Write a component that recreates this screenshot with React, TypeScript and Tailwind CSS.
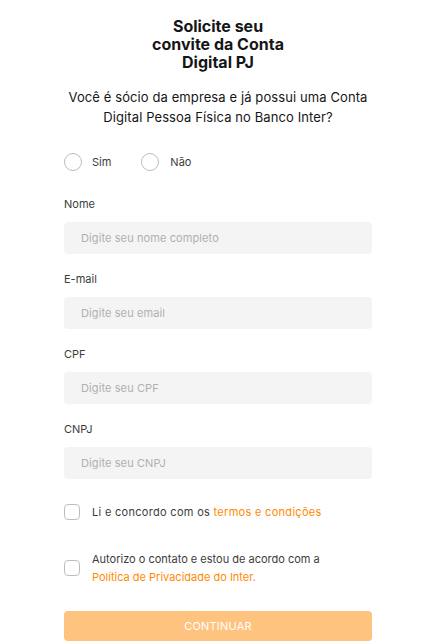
import React from "react";

const Field = ({ label, placeholder }: { label: string; placeholder: string }) => (
  <div className="flex flex-col">
    <label className="text-[11px] leading-[16px] text-[#3c3c3c]">{label}</label>
    <div className="mt-[10px] h-[32px] rounded-[4px] bg-[#f4f4f4] flex items-center pl-[17px] text-[11px] tracking-[0.1px] text-[#b0b0b0]">
      {placeholder}
    </div>
  </div>
);

export default function App() {
  return (
    <div className="min-h-[644px] bg-white" style={{ fontFamily: "Inter, 'Noto Sans', sans-serif" }}>
      <div className="ml-[64px] w-[308px] flex flex-col pt-[17px]">
        <h1 className="mx-auto w-[150px] text-center text-[16px] leading-[18px] font-bold text-[#161616]">
          Solicite seu convite da Conta Digital PJ
        </h1>
        <p className="mt-[16px] text-center text-[13px] leading-[20px] tracking-[0.1px] text-[#161616]">
          Você é sócio da empresa e já possui uma Conta Digital Pessoa Física no Banco Inter?
        </p>
        <div className="mt-[26px] flex items-center h-[18px]">
          <div className="flex items-center">
            <span className="w-[18px] h-[18px] rounded-full border border-[#bdbdbd]" />
            <span className="ml-[10px] text-[11px] text-[#3c3c3c]">Sim</span>
          </div>
          <div className="flex items-center ml-[30px]">
            <span className="w-[18px] h-[18px] rounded-full border border-[#bdbdbd]" />
            <span className="ml-[11px] text-[11px] text-[#3c3c3c]">Não</span>
          </div>
        </div>
        <div className="mt-[25px] flex flex-col gap-[17px]">
          <Field label="Nome" placeholder="Digite seu nome completo" />
          <Field label="E-mail" placeholder="Digite seu email" />
          <Field label="CPF" placeholder="Digite seu CPF" />
          <Field label="CNPJ" placeholder="Digite seu CNPJ" />
        </div>
        <div className="mt-[24px] flex items-center">
          <span className="w-[16px] h-[16px] rounded-[4px] border border-[#bdbdbd] shrink-0" />
          <span className="ml-[12px] text-[11px] leading-[18px] tracking-[0.3px] text-[#3c3c3c]">
            Li e concordo com os <span className="text-[#ff8a00]">termos e condições</span>
          </span>
        </div>
        <div className="mt-[29px] flex items-center">
          <span className="w-[16px] h-[16px] rounded-[4px] border border-[#bdbdbd] shrink-0" />
          <span className="ml-[12px] text-[11px] leading-[18px] text-[#3c3c3c]">
            Autorizo o contato e estou de acordo com a
            <br />
            <span className="text-[#ff8a00]">Política de Privacidade do Inter.</span>
          </span>
        </div>
        <button className="mt-[25px] h-[30px] rounded-[4px] bg-[#fec47f] text-white text-[11px] tracking-[0.2px]">
          CONTINUAR
        </button>
      </div>
    </div>
  );
}
